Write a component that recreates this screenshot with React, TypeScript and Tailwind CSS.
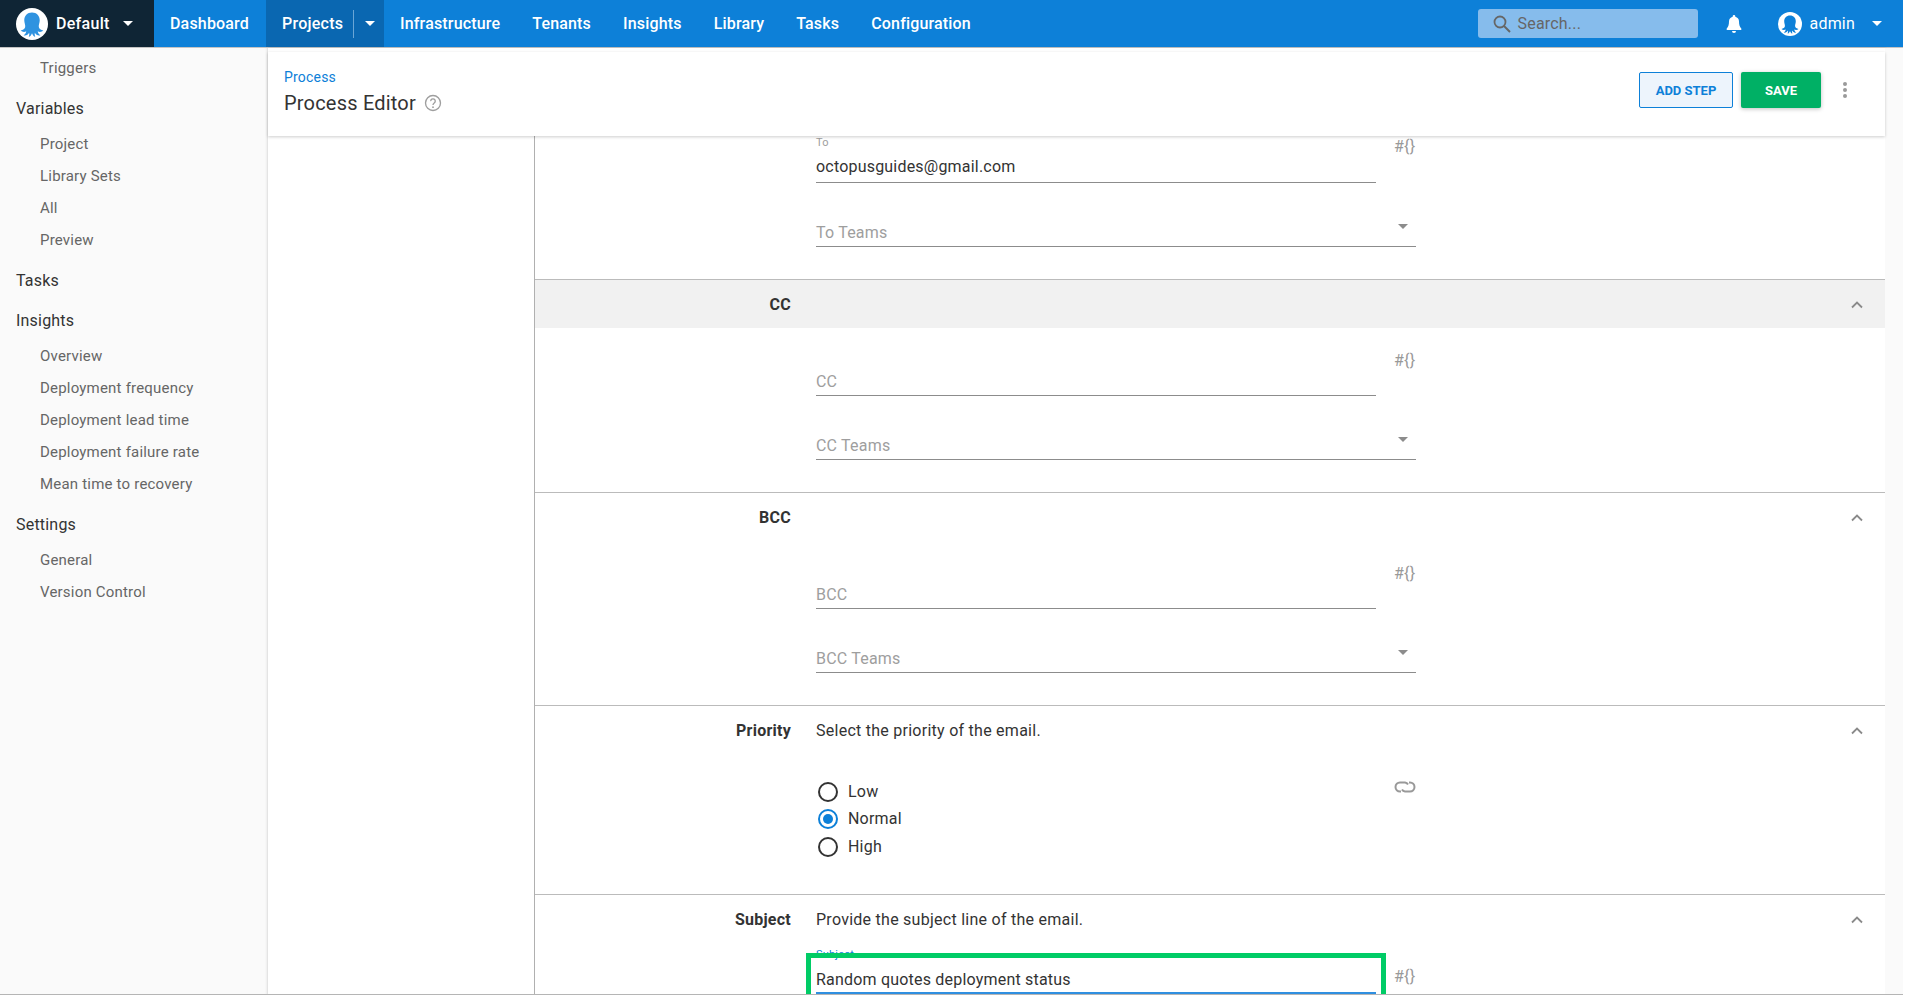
import React from "react";

function Octopus({ color }: { color: string }) {
  return (
    <svg viewBox="0 0 24 24" className="w-full h-full">
      <circle cx="12" cy="12" r="12" fill="#ffffff" />
      <path
        fill={color}
        d="M12 3.4C8.4 3.4 6.2 6 6.2 9.2c0 2 .9 3.4.7 5-.2 1.4-1.6 2.2-3.4 2.7 1 1.1 2.9 1.3 4.2.6-.2 1.2-.8 2.3-2 3 1.7.5 3.4-.4 4.2-1.9.2 1 .1 2-.3 3 1 0 1.9-1.2 2.4-2.6.5 1.4 1.4 2.6 2.4 2.6-.4-1-.5-2-.3-3 .8 1.5 2.5 2.4 4.2 1.9-1.2-.7-1.8-1.8-2-3 1.3.7 3.2.5 4.2-.6-1.8-.5-3.2-1.3-3.4-2.7-.2-1.6.7-3 .7-5C17.8 6 15.6 3.4 12 3.4z"
      />
    </svg>
  );
}

function Caret({ className }: { className: string }) {
  return (
    <svg viewBox="0 0 10 5" className={className}>
      <path d="M0 0h10L5 5z" fill="currentColor" />
    </svg>
  );
}

function Chevron() {
  return (
    <svg viewBox="0 0 12 8" className="w-[12px] h-[8px] text-[#8a8a8a]">
      <path d="M1 6.5 6 1.5l5 5" fill="none" stroke="currentColor" strokeWidth="1.8" />
    </svg>
  );
}

function NavItem({ label }: { label: string }) {
  return <div className="px-4 flex items-center h-full text-[16px] font-medium tracking-[0.17px] text-white">{label}</div>;
}

function SideHead({ label }: { label: string }) {
  return <div className="h-10 pl-4 pt-[2px] flex items-center text-[16px] text-[#333333]">{label}</div>;
}

function SideSub({ label }: { label: string }) {
  return <div className="h-8 pl-10 flex items-center text-[15px] text-[#666666]">{label}</div>;
}

function Hash({ className }: { className: string }) {
  return <div className={`w-10 pl-[18px] shrink-0 text-[16px] leading-[14px] whitespace-nowrap text-[#999999] ${className}`}>#{"{}"}</div>;
}

function TextField({ placeholder }: { placeholder: string }) {
  return (
    <div className="flex h-16">
      <div className="w-[560px] flex items-end border-b border-[#8c8c8c]">
        <div className="leading-[32px] h-[29px] text-[16px] text-[#9e9e9e]">{placeholder}</div>
      </div>
      <Hash className="mt-[22px]" />
    </div>
  );
}

function SelectField({ placeholder }: { placeholder: string }) {
  return (
    <div className="w-[600px] h-16 flex items-end justify-between border-b border-[#8c8c8c]">
      <div className="leading-[32px] h-[29px] text-[16px] text-[#9e9e9e]">{placeholder}</div>
      <Caret className="w-[10px] h-[5px] text-[#8c8c8c] mr-2 mb-[17px]" />
    </div>
  );
}

function Section({
  title,
  desc,
  shaded,
  children,
}: {
  title?: string;
  desc?: string;
  shaded?: boolean;
  children?: React.ReactNode;
}) {
  return (
    <div className="border-t border-[#bbbbbb]">
      <div className={`h-[48px] pt-[2px] flex items-center ${shaded ? "bg-[#f1f1f1]" : ""}`}>
        <div className="w-[256px] text-right text-[16px] font-bold tracking-[0.25px] text-[#333333] shrink-0">{title}</div>
        <div className="ml-[25px] flex-1 text-[16px] tracking-[0.26px] text-[#333333]">{desc}</div>
        <div className="w-[34px] shrink-0">
          <Chevron />
        </div>
      </div>
      <div className="pl-[281px]">{children}</div>
    </div>
  );
}

function Radio({ label, checked }: { label: string; checked?: boolean }) {
  return (
    <div className="h-[27.5px] flex items-center text-[16px] text-[#333333]">
      <div
        className={`w-5 h-5 ml-[2px] rounded-full border-2 flex items-center justify-center mr-[10px] ${
          checked ? "border-[#0d80d8]" : "border-[#333333]"
        }`}
      >
        {checked && <div className="w-[10px] h-[10px] rounded-full bg-[#0d80d8]" />}
      </div>
      {label}
    </div>
  );
}

export default function App() {
  return (
    <div className="w-[1903px] h-[995px] overflow-hidden flex flex-col border-b border-[#b5b5b5] bg-white tracking-[0.2px] [font-family:Roboto,sans-serif]">
      <header className="h-[48px] shrink-0 flex border-b border-[#c4c4c4] bg-[#0d80d8]">
        <div className="w-[154px] flex items-center bg-[#0f2535] pl-4 text-white text-[16px] font-medium tracking-[0.3px]">
          <div className="w-8 h-8 mr-[8px]">
            <Octopus color="#2f93e0" />
          </div>
          Default
          <Caret className="w-[10px] h-[5px] ml-[13px]" />
        </div>
        <div className="w-[112px] flex">
          <NavItem label="Dashboard" />
        </div>
        <div className="w-[118px] flex items-center bg-[#0a67b1] pl-4 text-[16px] font-medium tracking-[0.25px] text-white">
          Projects
          <div className="w-px h-[28px] bg-[#6aa6d6] ml-[10px]" />
          <Caret className="w-[10px] h-[5px] ml-[11px]" />
        </div>
        <NavItem label="Infrastructure" />
        <NavItem label="Tenants" />
        <NavItem label="Insights" />
        <NavItem label="Library" />
        <NavItem label="Tasks" />
        <NavItem label="Configuration" />
        <div className="ml-auto flex items-center">
          <div className="w-[220px] h-[29px] rounded-[3px] bg-[#86bcec] flex items-center pl-[15px] text-[16px] text-[#666666]">
            <svg viewBox="0 0 18 18" className="w-[18px] h-[18px] mr-[7px]">
              <circle cx="7" cy="7" r="5.5" fill="none" stroke="#666666" strokeWidth="1.8" />
              <path d="M11 11l6 6" stroke="#666666" strokeWidth="2" />
            </svg>
            Search...
          </div>
          <svg viewBox="0 0 16 18" className="w-[16px] h-[18px] ml-[28px] text-white">
            <path
              fill="currentColor"
              d="M8 0a1.3 1.3 0 0 0-1.3 1.3v.5A5 5 0 0 0 3 6.6c0 3.4-.8 5.5-2.3 7V15h14.6v-1.4c-1.5-1.5-2.3-3.6-2.3-7a5 5 0 0 0-3.7-4.8v-.5A1.3 1.3 0 0 0 8 0zM6 16a2 2 0 0 0 4 0z"
            />
          </svg>
          <div className="w-6 h-6 ml-[36px]">
            <Octopus color="#0d80d8" />
          </div>
          <div className="ml-2 text-[16px] text-white">admin</div>
          <Caret className="w-[10px] h-[5px] ml-[17px] mr-[21px] text-white" />
        </div>
      </header>

      <div className="flex-1 min-h-0 flex">
        <aside className="w-[268px] shrink-0 pt-1 bg-[#fafafa] border-r border-[#e6e6e6] shadow-[inset_-2px_0_2px_-1px_rgba(0,0,0,0.05)]">
          <div className="mb-1">
            <SideSub label="Triggers" />
          </div>
          <SideHead label="Variables" />
          <div className="mb-1">
            <SideSub label="Project" />
            <SideSub label="Library Sets" />
            <SideSub label="All" />
            <SideSub label="Preview" />
          </div>
          <SideHead label="Tasks" />
          <SideHead label="Insights" />
          <div className="mb-1">
            <SideSub label="Overview" />
            <SideSub label="Deployment frequency" />
            <SideSub label="Deployment lead time" />
            <SideSub label="Deployment failure rate" />
            <SideSub label="Mean time to recovery" />
          </div>
          <SideHead label="Settings" />
          <SideSub label="General" />
          <SideSub label="Version Control" />
        </aside>

        <main className="w-[1617px] shrink-0 flex flex-col pt-1 bg-white shadow-[1px_0_2px_rgba(0,0,0,0.12)]">
          <div className="relative z-10 h-[84px] shrink-0 flex items-center bg-white pl-4 shadow-[0_1px_3px_rgba(0,0,0,0.2)]">
            <div className="mb-[5px]">
              <div className="text-[14px] leading-[18px] text-[#0d80d8]">Process</div>
              <div className="flex items-center mt-[4px] text-[20px] leading-[26px] text-[#333333]">
                Process Editor
                <svg viewBox="0 0 24 24" className="w-[18px] h-[18px] ml-2 text-[#9e9e9e]">
                  <circle cx="12" cy="12" r="10" fill="none" stroke="currentColor" strokeWidth="1.8" />
                  <path
                    d="M9 9.5a3 3 0 1 1 4.6 2.5c-1 .7-1.6 1.3-1.6 2.5"
                    fill="none"
                    stroke="currentColor"
                    strokeWidth="1.8"
                  />
                  <circle cx="12" cy="17.5" r="1.2" fill="currentColor" />
                </svg>
              </div>
            </div>
            <div className="ml-auto flex items-center mt-[-8px] tracking-normal">
              <div className="w-[94px] h-9 pt-[2px] flex items-center justify-center rounded-[2px] border border-[#0d80d8] bg-[#edf4fc] text-[13px] font-bold text-[#0d80d8]">
                ADD STEP
              </div>
              <div className="w-[80px] h-9 ml-2 pt-[2px] flex items-center justify-center rounded-[2px] bg-[#00b065] text-[13px] font-bold text-white shadow-[0_1px_4px_rgba(0,0,0,0.25)]">
                SAVE
              </div>
              <div className="w-[5px] ml-[21px] mr-[38px] flex flex-col gap-[2px] items-center">
                <div className="w-1 h-1 rounded-full bg-[#9a9a9a]" />
                <div className="w-1 h-1 rounded-full bg-[#9a9a9a]" />
                <div className="w-1 h-1 rounded-full bg-[#9a9a9a]" />
              </div>
            </div>
          </div>

          <div className="flex-1 min-h-0 overflow-hidden pl-[266px]">
            <div className="border-l border-[#b0b0b0] h-full">
              <div className="pl-[281px] h-[143px]">
                <div className="w-[600px]">
                  <div className="flex h-[47px]">
                    <div className="w-[560px] flex flex-col justify-end border-b border-[#8c8c8c]">
                      <div className="text-[11px] leading-[14px] text-[#9e9e9e]">To</div>
                      <div className="mt-[3px] h-[29px] leading-[28px] text-[16px] text-[#333333]">octopusguides@gmail.com</div>
                    </div>
                    <Hash className="mt-[4px]" />
                  </div>
                  <SelectField placeholder="To Teams" />
                </div>
              </div>

              <Section title="CC" shaded>
                <div className="pt-[4px] pb-[32px] w-[600px]">
                  <TextField placeholder="CC" />
                  <SelectField placeholder="CC Teams" />
                </div>
              </Section>

              <Section title="BCC">
                <div className="pt-[4px] pb-[32px] w-[600px]">
                  <TextField placeholder="BCC" />
                  <SelectField placeholder="BCC Teams" />
                </div>
              </Section>

              <Section title="Priority" desc="Select the priority of the email.">
                <div className="pt-[24px] w-[600px] flex justify-between items-start h-[140px]">
                  <div>
                    <Radio label="Low" />
                    <Radio label="Normal" checked />
                    <Radio label="High" />
                  </div>
                  <div className="w-[22px] flex justify-center mt-[3px]">
                    <svg viewBox="0 0 22 12" className="w-[22px] h-[12px] text-[#999999]">
                      <path
                        d="M7 10.5H6a4.5 4.5 0 0 1 0-9h5a4 4 0 0 1 3 2M15 1.5h1a4.5 4.5 0 0 1 0 9h-5a4 4 0 0 1-3-2"
                        fill="none"
                        stroke="currentColor"
                        strokeWidth="2"
                      />
                    </svg>
                  </div>
                </div>
              </Section>

              <Section title="Subject" desc="Provide the subject line of the email.">
                <div className="pt-[5px] flex">
                  <div className="relative w-[560px] h-[46px] border-b-2 border-[#2f8fe0]">
                    <div className="text-[11px] leading-[14px] text-[#0d80d8]">Subject</div>
                    <div className="mt-[4px] leading-[28px] text-[16px] text-[#333333]">Random quotes deployment status</div>
                    <div className="absolute left-[-10px] right-[-10px] top-[5px] h-[100px] border-[5px] border-[#00cc66]" />
                  </div>
                  <Hash className="mt-[22px]" />
                </div>
              </Section>
            </div>
          </div>
        </main>
        <div className="w-[18px] shrink-0 bg-[#fafafa]" />
      </div>
    </div>
  );
}
